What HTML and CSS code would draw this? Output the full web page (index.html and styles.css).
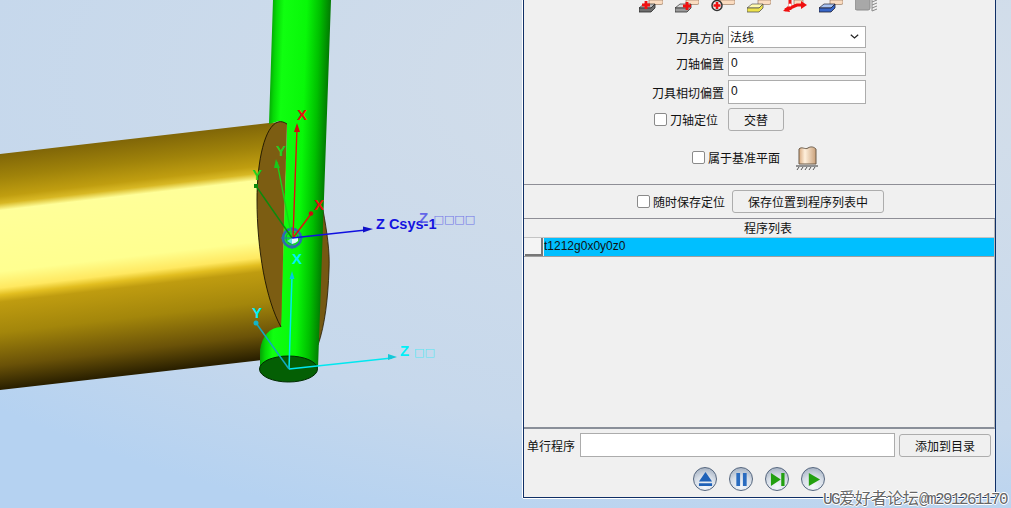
FILE: index.html
```html
<!DOCTYPE html>
<html lang="zh">
<head>
<meta charset="utf-8">
<title>刀具定位</title>
<link rel="stylesheet" href="styles.css">
</head>
<body>
<main class="app">
  <svg class="scene" width="523" height="508" viewBox="0 0 523 508">
    <defs>
      <linearGradient id="gold" gradientUnits="userSpaceOnUse" x1="0" y1="154" x2="27" y2="386">
        <stop offset="0%" stop-color="#806608"/>
        <stop offset="10%" stop-color="#a0830a"/>
        <stop offset="18%" stop-color="#c09e10"/>
        <stop offset="21%" stop-color="#d8b824"/>
        <stop offset="24%" stop-color="#ffff99"/>
        <stop offset="50%" stop-color="#ffff90"/>
        <stop offset="57%" stop-color="#ffe860"/>
        <stop offset="60%" stop-color="#e2be20"/>
        <stop offset="63%" stop-color="#bf9c10"/>
        <stop offset="76%" stop-color="#a3860b"/>
        <stop offset="90%" stop-color="#6a5208"/>
        <stop offset="100%" stop-color="#2a2000"/>
      </linearGradient>
      <linearGradient id="tube" gradientUnits="userSpaceOnUse" x1="271" y1="0" x2="331" y2="2">
        <stop offset="0%" stop-color="#069606"/>
        <stop offset="10%" stop-color="#06d806"/>
        <stop offset="22%" stop-color="#10ff10"/>
        <stop offset="60%" stop-color="#08f808"/>
        <stop offset="82%" stop-color="#00c000"/>
        <stop offset="100%" stop-color="#027a02"/>
      </linearGradient>
    </defs>
    <path d="M0 154 L269 123 L281 122 L300 300 L262 360 L0 390 Z" fill="url(#gold)"/>
    <path d="M323 210 C327 232 330 252 329 270 C328 298 325 325 318 345 L310 345 L315 210 Z" fill="#755812" stroke="#221800" stroke-width=".8"/>
    <path d="M273 0 H331 L318 368 H260 V350 C262 336 270 327 281 327 L287 124 L279 121 L269 124 Z" fill="url(#tube)"/>
    <path d="M287 124 C284 122 281 121 278 122 C265 126 257 160 257 200 C257 250 266 300 281 327 Z" fill="#7c5d12"/>
    <path d="M287 124 C284 122 281 121 278 122 C265 126 257 160 257 200 C257 250 266 300 281 327" fill="none" stroke="#1c1400" stroke-width=".9"/>
    <ellipse cx="288.500" cy="369" rx="29" ry="13" fill="#045f04" stroke="#012a01"/>

    <circle cx="292" cy="238" r="9" fill="none" stroke="#2f6cab" stroke-width="2.800"/>
    <circle cx="292" cy="238" r="6" fill="none" stroke="#1f4f88" stroke-width=".7"/>
    <path d="M281 238 H303 M292 227 V249" stroke="#2f6fae" stroke-width="1"/>
    <path d="M292 238 H298 V241 Q295 244 292 244 Z" fill="#dff8fb"/>
    <path d="M292 238 L287 241 L292 244 Z" fill="#63dfe6"/>

    <path d="M293 238 L297 128" stroke="#e01010" stroke-width="1.400"/>
    <path d="M297 123 L294 132 H300 Z" fill="#c81010"/>
    <path d="M293 238 L311 214" stroke="#e01010" stroke-width="1.400"/>
    <circle cx="311" cy="213.500" r="2.300" fill="#c81010"/>
    <text x="297" y="120" class="lab red">X</text>
    <text x="314" y="210" class="lab red">X</text>
    <path d="M292 238 L277 162" stroke="#19d419" stroke-width="1.300"/>
    <path d="M276 159 L274 168 H280 Z" fill="#19c819"/>
    <text x="276" y="156" class="lab green">Y</text>
    <path d="M292 238 L256 186" stroke="#0c8a0c" stroke-width="1.400"/>
    <rect x="254" y="184" width="4" height="4" fill="#0c8a0c"/>
    <text x="252" y="180" class="lab green">Y</text>
    <path d="M292 238 L366 230" stroke="#1010e0" stroke-width="1.500"/>
    <path d="M373 229 L363 226.500 V232.500 Z" fill="#1010c8"/>
    <text x="376" y="229" class="lab csys">Z Csys-1</text>
    <text x="419" y="223" class="ghost">Z<tspan x="433.500" class="ghost-box">□□□□</tspan></text>

    <path d="M289 369 L292 276 M289 369 L392 358" stroke="#00e8f0" stroke-width="1.500" fill="none"/>
    <path d="M292 271 L289.500 279 H294.500 Z" fill="#00c8e0"/>
    <path d="M289 369 L256 323" stroke="#14a8c0" stroke-width="1.500"/>
    <circle cx="256" cy="323" r="2.500" fill="#14b4c8"/>
    <path d="M397 357 L388 354 V360 Z" fill="#14c8d8"/>
    <text x="292" y="264" class="lab cyan">X</text>
    <text x="252" y="318" class="lab cyan">Y</text>
    <text x="400" y="356" class="lab cyan">Z</text>
    <text x="414" y="356" class="tofu">□□</text>
  </svg>

  <section class="panel">
    <div class="toolbar">
      <svg width="24" height="13" viewBox="0 0 24 13"><path d="M10 0 H24 V3 Q24 4.500 22 4.500 H10 Z" fill="#fbdcc0" stroke="#8a6a50" stroke-width=".6"/><path d="M0 8 L5 4 H16 L12 8 Z" fill="#bdbdbd" stroke="#333" stroke-width=".7"/><path d="M0 8 H12 L16 4 V8 L12 12 H0 Z" fill="#6e6e6e" stroke="#2a2a2a" stroke-width=".8"/><path d="M7 1 V9 M3 5 H11" stroke="#f01010" stroke-width="2.800"/></svg>
      <svg width="24" height="13" viewBox="0 0 24 13"><path d="M11 0 H24 V3 Q24 4.500 22 4.500 H11 Z" fill="#fbdcc0" stroke="#8a6a50" stroke-width=".6"/><path d="M0 8 L5 4 H16 L12 8 Z" fill="#d8d8d8" stroke="#333" stroke-width=".7"/><path d="M0 8 H12 L16 4 V8 L12 12 H0 Z" fill="#9a9a9a" stroke="#333" stroke-width=".8"/><path d="M12 2 V10 M8 6 H16" stroke="#f01010" stroke-width="2.800"/></svg>
      <svg width="24" height="13" viewBox="0 0 24 13"><path d="M9 0 H24 V3 Q24 4.500 22 4.500 H9 Z" fill="#fbdcc0" stroke="#8a6a50" stroke-width=".6"/><circle cx="6" cy="5.500" r="5" fill="#ececec" stroke="#333" stroke-width="1.500"/><path d="M6 2 V9 M2.500 5.500 H9.500" stroke="#f01010" stroke-width="2.600"/></svg>
      <svg width="24" height="13" viewBox="0 0 24 13"><path d="M11 0 H24 V3 Q24 4.500 22 4.500 H11 Z" fill="#fbdcc0" stroke="#8a6a50" stroke-width=".6"/><path d="M0 8 L5 4 H16 L12 8 Z" fill="#fffbb0" stroke="#555" stroke-width=".7"/><path d="M0 8 H12 L16 4 V8 L12 12 H0 Z" fill="#eee34a" stroke="#555" stroke-width=".8"/></svg>
      <svg width="24" height="13" viewBox="0 0 24 13"><path d="M11 0 H20 V3 Q20 4.500 18 4.500 H11 Z" fill="#fbdcc0" stroke="#8a6a50" stroke-width=".6"/><path d="M7 0 V10 M2 10 L7 8 L14 5 H20" stroke="#f01010" stroke-width="3" fill="none"/><path d="M24 5 L18 1 V9 Z M0 11 L5 6 L7 12 Z" fill="#f01010"/><circle cx="7" cy="5" r="1.500" fill="#fff"/></svg>
      <svg width="24" height="13" viewBox="0 0 24 13"><path d="M11 0 H24 V3 Q24 4.500 22 4.500 H11 Z" fill="#fbdcc0" stroke="#8a6a50" stroke-width=".6"/><path d="M0 8 L5 4 H16 L12 8 Z" fill="#a9c4f2" stroke="#223" stroke-width=".7"/><path d="M0 8 H12 L16 4 V8 L12 12 H0 Z" fill="#3766c8" stroke="#223" stroke-width=".8"/></svg>
      <svg width="24" height="13" viewBox="0 0 24 13"><rect x="0" y="-4" width="15" height="14" rx="2" fill="#a8a8a8" stroke="#8c8c8c"/><path d="M17 0 V11 M17 2 L22 0 M17 5 L22 3 M17 8 L22 6 M17 11 L22 9" stroke="#888" fill="none"/></svg>
    </div>

    <div class="form">
      <label class="lbl">刀具方向</label>
      <div class="select"><span>法线</span><svg width="9" height="5" viewBox="0 0 9 5"><path d="M.8.8 4.500 4 8.200.8" fill="none" stroke="#222" stroke-width="1.200"/></svg></div>
      <label class="lbl raised">刀轴偏置</label>
      <div class="input">0</div>
      <label class="lbl">刀具相切偏置</label>
      <div class="input">0</div>
      <label class="lbl check-lbl inset"><i class="check"></i>刀轴定位</label>
      <button class="btn swap">交替</button>
    </div>

    <div class="plane">
      <label class="check-lbl raised"><i class="check"></i>属于基准平面</label>
      <svg width="22" height="24" viewBox="0 0 22 24"><defs><linearGradient id="peach" x1="0" x2="1" y1="0" y2="0"><stop offset="0%" stop-color="#d8aa80"/><stop offset="35%" stop-color="#fff0dc"/><stop offset="100%" stop-color="#c9a07a"/></linearGradient></defs><path d="M3 3 C6 0 9 4 12 2 C15 0 18 1 20 3 V18 H3 Z" fill="url(#peach)" stroke="#6a5a48"/><path d="M0 20 H22" stroke="#333"/><path d="M3 21 L1 24 M7 21 L5 24 M11 21 L9 24 M15 21 L13 24 M19 21 L17 24" stroke="#555"/></svg>
    </div>

    <div class="save">
      <label class="check-lbl"><i class="check"></i>随时保存定位</label>
      <button class="btn save-btn">保存位置到程序列表中</button>
    </div>

    <div class="table">
      <div class="thead">程序列表</div>
      <div class="trow"><span class="rowhead"></span><span class="cell">t1212g0x0y0z0</span></div>
    </div>

    <div class="single">
      <label>单行程序</label>
      <div class="input wide"></div>
      <button class="btn add">添加到目录</button>
    </div>

    <div class="transport">
      <span class="round"><svg viewBox="0 0 16 16"><path d="M8 0 L15 10 H1 Z M1 12 H15 V15 H1 Z" fill="#1f62b8"/></svg></span>
      <span class="round"><svg viewBox="0 0 16 16"><path d="M2.500 1 H6.500 V15 H2.500 Z M9.500 1 H13.500 V15 H9.500 Z" fill="#2a6cc0"/></svg></span>
      <span class="round"><svg viewBox="0 0 16 16"><path d="M1 1 L11.500 8 L1 15 Z M12 1 H15.500 V15 H12 Z" fill="#22a010"/></svg></span>
      <span class="round"><svg viewBox="0 0 16 16"><path d="M3 1 L15 8 L3 15 Z" fill="#22a010"/></svg></span>
    </div>
  </section>
  <div class="watermark"><span class="wm-l">UG</span>爱好者论坛<span class="wm-l">@m291261170</span></div>
</main>
</body>
</html>
```
FILE: styles.css
```css
* { box-sizing: border-box; }
html, body { margin: 0; padding: 0; }
body {
  width: 1011px;
  height: 508px;
  overflow: hidden;
  font-family: "Noto Sans CJK SC", "Liberation Sans", sans-serif;
  font-size: 12px;
  color: #111;
}
.app {
  position: relative;
  display: flex;
  align-items: flex-start;
  width: 1011px;
  height: 508px;
  background: radial-gradient(ellipse 1100px 480px at 800px 80px, #d6dfe9 0%, #c6d8ec 75%, #b5d2f1 100%);
}
.scene { display: block; flex: none; }

.lab { font: bold 15px "Liberation Sans", sans-serif; }
.red { fill: #e81010; }
.green { fill: #20d020; }
.cyan { fill: #00f0f8; }
.csys { fill: #1414e0; font-size: 14.500px; }
.ghost { font: bold 15px "Liberation Sans", sans-serif; fill: #4a4ae8; opacity: .8; }
.ghost-box { font: 11px "DejaVu Sans", sans-serif; fill: #5a5ae8; }
.tofu { font: 11px "DejaVu Sans", sans-serif; fill: #00f0f8; opacity: .6; }

.panel {
  flex: none;
  width: 473px;
  height: 498px;
  background: #f0f0f0;
  border: solid #0f2f66;
  border-width: 0 1px 1px 1px;
  box-shadow: -1px 0 0 #fff, 0 1px 0 #fff;
  display: flex;
  flex-direction: column;
}
.toolbar {
  display: flex;
  gap: 12px;
  height: 13px;
  margin-bottom: 13px;
  padding-left: 115px;
}
.toolbar svg { display: block; flex: none; }

.form {
  display: grid;
  grid-template-columns: 200px 138px;
  column-gap: 4px;
  grid-template-rows: 22px 24px 24px 23px;
  row-gap: 4px;
}
.lbl { display: flex; align-items: center; justify-content: flex-end; }
.raised { padding-bottom: 2px; }
.inset { padding-right: 6px; }
.check-lbl { display: flex; align-items: center; gap: 3px; }
.check {
  display: block;
  width: 13px;
  height: 13px;
  background: #fff;
  border: 1px solid #8a8a8a;
  border-radius: 2px;
}
.select, .input {
  display: flex;
  align-items: center;
  background: #fff;
  border: 1px solid #acacac;
  padding-left: 1px;
}
.input {
  font-family: "Liberation Sans", sans-serif;
  font-size: 12px;
  padding: 0 0 2px 2px;
}
.select { justify-content: space-between; padding: 0 6px 1px 1px; }
.btn {
  font: inherit;
  color: #111;
  background: #f0f0f0;
  border: 1px solid #adadad;
  border-radius: 3px;
  padding: 0;
}
.swap { width: 56px; height: 23px; }

.plane {
  display: flex;
  align-items: center;
  gap: 16px;
  height: 24px;
  margin-top: 15px;
  padding-left: 168px;
}
.save {
  display: flex;
  align-items: center;
  gap: 7px;
  height: 35px;
  margin-top: 14px;
  padding-left: 113px;
  border-top: 1px solid #8e8e96;
  border-bottom: 1px solid #8e8e96;
}
.save-btn { width: 152px; height: 23px; }

.table {
  height: 210px;
  border-bottom: 2px solid #8a8f99;
  border-right: 1px solid #b8b8b8;
}
.thead {
  height: 19px;
  line-height: 18px;
  padding-left: 18px;
  text-align: center;
  border-bottom: 1px solid #c4c4c4;
}
.trow {
  display: flex;
  height: 19px;
  border-bottom: 1px solid #a0a0a0;
}
.rowhead {
  width: 18px;
  margin-left: 1px;
  background: #f4f4f4;
  border-right: 2px solid #777;
  border-bottom: 2px solid #777;
}
.cell {
  flex: 1;
  margin-left: 1px;
  background: #00bfff;
  font-family: "Liberation Sans", sans-serif;
  font-size: 12px;
  line-height: 17px;
}

.single {
  display: flex;
  align-items: center;
  gap: 4px;
  height: 24px;
  margin-top: 4px;
  padding-left: 3px;
}
.single label { margin-right: 1px; }
.wide { width: 315px; height: 24px; }
.add { width: 92px; height: 23px; }

.transport {
  display: flex;
  gap: 12px;
  margin-top: 10px;
  padding-left: 169px;
}
.round {
  display: flex;
  align-items: center;
  justify-content: center;
  width: 24px;
  height: 24px;
  border-radius: 50%;
  border: 1px solid #56677f;
  background: radial-gradient(circle at 50% 85%, #f4f7fb 0%, #d8dfe8 50%, #95a3b6 100%);
}
.round svg { display: block; width: 15px; height: 15px; }

.watermark {
  position: absolute;
  left: 823px;
  top: 486px;
  font: 16px/22px "Noto Sans CJK SC", sans-serif;
  color: #666;
  text-shadow: 1px 0 0 #fff, -1px 0 0 #fff, 0 1px 0 #fff, 0 -1px 0 #fff;
  white-space: nowrap;
}
.wm-l { font: 16px/22px "Liberation Mono", monospace; letter-spacing: -1.600px; }
```
